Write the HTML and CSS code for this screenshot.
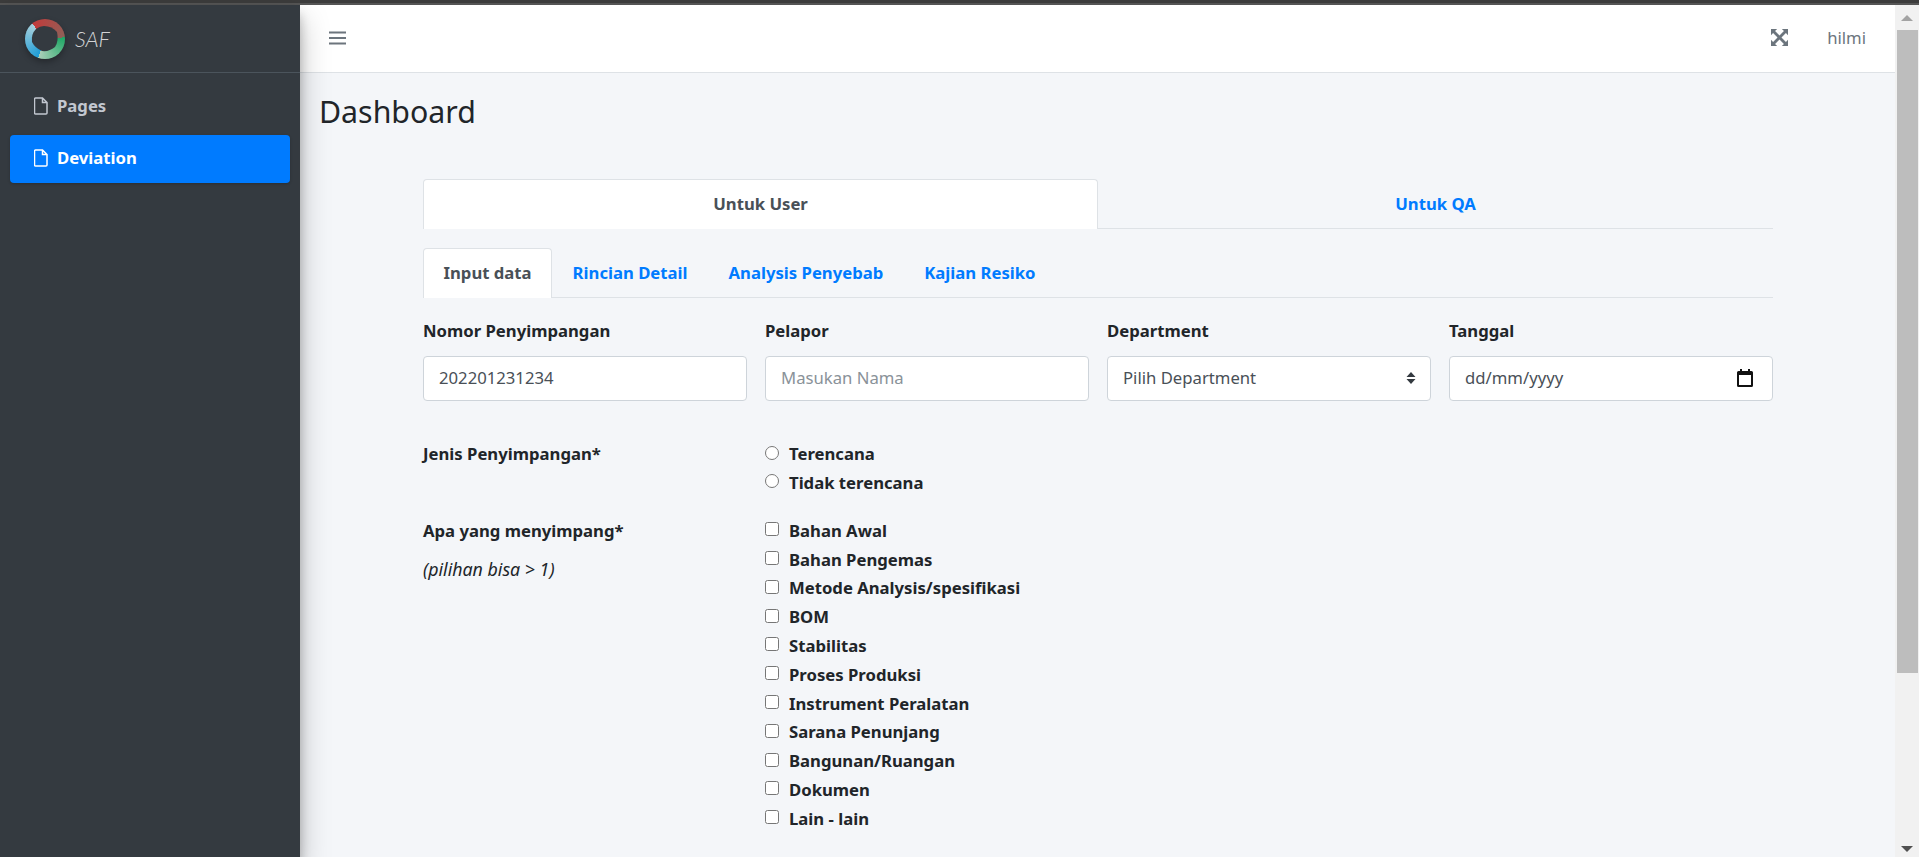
FILE: index.html
```html
<!DOCTYPE html>
<html lang="en">
<head>
    <meta charset="UTF-8">
    <meta name="viewport" content="width=device-width, initial-scale=1.0">
    <title>Dashboard</title>
    <link rel="stylesheet" href="styles.css">
</head>
<body>
    <div class="topStrip"></div>
    <div class="app">
        <aside class="sidebar">
            <div class="brand">
                <div class="brandLogo">
                    <svg class="brandHole" viewBox="0 0 28 28"><path d="M13 1 Q21 1 26 7 Q28 16 24 22 Q18 27 11 26 Q4 23 1 17 Q0 9 5 4 Q9 1 13 1Z"/></svg>
                </div>
                <span class="brandText">SAF</span>
            </div>
            <nav class="sideNav">
                <a class="sideLink" href="#">
                    <svg class="fileIcon" viewBox="0 0 14 18"><path d="M1.500 1h7l4.500 4.500v10.500a1 1 0 0 1-1 1h-10.500a1 1 0 0 1-1-1v-14a1 1 0 0 1 1-1zM8.500 1v4.500h4.500"/></svg>
                    Pages
                </a>
                <a class="sideLink active" href="#">
                    <svg class="fileIcon" viewBox="0 0 14 18"><path d="M1.500 1h7l4.500 4.500v10.500a1 1 0 0 1-1 1h-10.500a1 1 0 0 1-1-1v-14a1 1 0 0 1 1-1zM8.500 1v4.500h4.500"/></svg>
                    Deviation
                </a>
            </nav>
        </aside>

        <div class="main">
            <header class="navbar">
                <svg class="burger" viewBox="0 0 17 14"><path d="M0 1.500h17M0 7h17M0 12.500h17"/></svg>
                <div class="navRight">
                    <svg class="expand" viewBox="0 0 18 18">
                        <path d="M0 0h6.500L4.300 2.200 9 6.900 13.700 2.200 11.500 0H18v6.500l-2.200-2.200L11.100 9l4.700 4.700 2.200-2.200V18h-6.500l2.200-2.200L9 11.100l-4.700 4.700L6.500 18H0v-6.500l2.200 2.200L6.900 9 2.200 4.300 0 6.500z"/>
                    </svg>
                    <span class="userName">hilmi</span>
                </div>
            </header>

            <main class="content">
                <h1 class="pageTitle">Dashboard</h1>

                <div class="formWrap">
                    <div class="tabs tabsFill">
                        <a class="tab active" href="#">Untuk User</a>
                        <a class="tab" href="#">Untuk QA</a>
                    </div>
                    <div class="tabs tabsSub">
                        <a class="tab active" href="#">Input data</a>
                        <a class="tab" href="#">Rincian Detail</a>
                        <a class="tab" href="#">Analysis Penyebab</a>
                        <a class="tab" href="#">Kajian Resiko</a>
                    </div>

                    <div class="fieldRow">
                        <div class="field">
                            <label class="fieldLabel">Nomor Penyimpangan</label>
                            <input class="control" type="text" value="202201231234">
                        </div>
                        <div class="field">
                            <label class="fieldLabel">Pelapor</label>
                            <input class="control" type="text" placeholder="Masukan Nama">
                        </div>
                        <div class="field">
                            <label class="fieldLabel">Department</label>
                            <div class="controlWrap">
                                <select class="control">
                                    <option>Pilih Department</option>
                                </select>
                                <svg class="selectArrows" viewBox="0 0 10 12"><path d="M5 0l4.500 5h-9zM5 12l4.500-5h-9z"/></svg>
                            </div>
                        </div>
                        <div class="field">
                            <label class="fieldLabel">Tanggal</label>
                            <div class="controlWrap">
                                <input class="control" type="text" value="dd/mm/yyyy">
                                <svg class="calendar" viewBox="0 0 16 18"><path d="M3 0h2v2h6V0h2v2h1.500A1.500 1.500 0 0 1 16 3.500v13a1.500 1.500 0 0 1-1.500 1.500h-13A1.500 1.500 0 0 1 0 16.500v-13A1.500 1.500 0 0 1 1.500 2H3zM2 6v10h12V6z"/></svg>
                            </div>
                        </div>
                    </div>

                    <div class="choiceRow">
                        <div class="choiceLabel">
                            <p class="choiceTitle">Jenis Penyimpangan*</p>
                        </div>
                        <div class="choiceList">
                            <label class="choice"><input type="radio" name="jenis"> Terencana</label>
                            <label class="choice"><input type="radio" name="jenis"> Tidak terencana</label>
                        </div>
                    </div>

                    <div class="choiceRow">
                        <div class="choiceLabel">
                            <p class="choiceTitle">Apa yang menyimpang*</p>
                            <p class="choiceHint">(pilihan bisa &gt; 1)</p>
                        </div>
                        <div class="choiceList">
                            <label class="choice"><input type="checkbox"> Bahan Awal</label>
                            <label class="choice"><input type="checkbox"> Bahan Pengemas</label>
                            <label class="choice"><input type="checkbox"> Metode Analysis/spesifikasi</label>
                            <label class="choice"><input type="checkbox"> BOM</label>
                            <label class="choice"><input type="checkbox"> Stabilitas</label>
                            <label class="choice"><input type="checkbox"> Proses Produksi</label>
                            <label class="choice"><input type="checkbox"> Instrument Peralatan</label>
                            <label class="choice"><input type="checkbox"> Sarana Penunjang</label>
                            <label class="choice"><input type="checkbox"> Bangunan/Ruangan</label>
                            <label class="choice"><input type="checkbox"> Dokumen</label>
                            <label class="choice"><input type="checkbox"> Lain - lain</label>
                        </div>
                    </div>
                </div>
            </main>
        </div>

        <div class="scrollbar">
            <span class="scrollUp"></span>
            <div class="scrollThumb"></div>
            <span class="scrollDown"></span>
        </div>
    </div>
</body>
</html>
```

FILE: styles.css
```css
* {
    box-sizing: border-box;
}
html, body {
    height: 100%;
    margin: 0;
    overflow: hidden;
}
body {
    display: flex;
    flex-direction: column;
    font-family: "Noto Sans", "Open Sans", sans-serif;
    font-size: 16.7px;
    line-height: 24px;
    color: #212529;
    background-color: #f4f6f9;
}
a {
    text-decoration: none;
}

.topStrip {
    height: 5px;
    flex: none;
    background-color: #3c3c3c;
    border-bottom: 2px solid #555;
}
.app {
    flex: 1;
    display: flex;
    min-height: 0;
}

/* sidebar */
.sidebar {
    width: 300px;
    flex: none;
    background-color: #343a40;
    box-shadow: 0 14px 28px rgba(0, 0, 0, 0.25), 0 10px 10px rgba(0, 0, 0, 0.22);
    z-index: 2;
}
.brand {
    height: 68px;
    display: flex;
    align-items: center;
    gap: 10px;
    padding-left: 25px;
    border-bottom: 1px solid #4b545c;
}
.brandLogo {
    width: 40px;
    height: 40px;
    display: grid;
    place-items: center;
    border-radius: 50%;
    background: conic-gradient(from 320deg, #c33a3a 0, #8f6058 125deg, #1fa765 125deg, #a9cfb8 240deg, #1e9dd6 240deg, #a8d0dc 360deg);
    box-shadow: 0 3px 6px rgba(0, 0, 0, 0.3);
}
.brandHole {
    width: 28px;
    height: 28px;
    fill: #343a40;
}
.brandText {
    font-family: "Lato", sans-serif;
    font-size: 21.500px;
    font-style: italic;
    font-weight: 300;
    color: rgba(255, 255, 255, 0.8);
}
.sideNav {
    padding: 10px 10px 0;
    display: flex;
    flex-direction: column;
    gap: 4px;
}
.sideLink {
    height: 48px;
    display: flex;
    align-items: center;
    gap: 9px;
    padding: 0 0 2px 24px;
    border-radius: 4px;
    font-weight: 700;
    color: #c2c7d0;
}
.sideLink.active {
    background-color: #007bff;
    color: #fff;
    box-shadow: 0 1px 3px rgba(0, 0, 0, 0.2);
}
.fileIcon {
    width: 14px;
    height: 18px;
    fill: none;
    stroke: currentColor;
    stroke-width: 1.5;
}

/* top navbar */
.main {
    flex: 1;
    min-width: 0;
    display: flex;
    flex-direction: column;
}
.navbar {
    height: 68px;
    flex: none;
    display: flex;
    align-items: center;
    justify-content: space-between;
    padding: 0 29px 2px;
    background-color: #fff;
    border-bottom: 1px solid #dee2e6;
}
.burger {
    width: 17px;
    height: 14px;
    fill: none;
    stroke: #6c757d;
    stroke-width: 2;
}
.navRight {
    display: flex;
    align-items: center;
    gap: 39px;
}
.expand {
    width: 17px;
    height: 17px;
    fill: #6c757d;
}
.userName {
    color: #6c757d;
}

/* page */
.content {
    flex: 1;
    padding: 0 19px;
}
.pageTitle {
    margin: 19px 0 0;
    font-size: 30.300px;
    font-weight: 400;
    line-height: 40px;
}
.formWrap {
    margin: 47px 103px 0 104px;
}

.tabs {
    display: flex;
    border-bottom: 1px solid #dee2e6;
    font-weight: 700;
}
.tab {
    color: #007bff;
    border: 1px solid transparent;
    border-bottom: 0;
    border-radius: 4px 4px 0 0;
    margin-bottom: -1px;
    text-align: center;
}
.tab.active {
    color: #495057;
    background-color: #fff;
    border-color: #dee2e6;
    padding-bottom: 1px;
}
.tabsFill .tab {
    flex: 1;
    height: 50px;
    line-height: 48px;
}
.tabsSub {
    margin-top: 19px;
}
.tabsSub .tab {
    height: 50px;
    line-height: 48px;
    padding: 0 19.500px;
}

.fieldRow {
    display: grid;
    grid-template-columns: repeat(4, 1fr);
    gap: 18px;
    margin-top: 21px;
}
.fieldLabel {
    display: block;
    font-weight: 700;
    margin-bottom: 13px;
}
.controlWrap {
    position: relative;
}
.control {
    display: block;
    width: 100%;
    height: 45px;
    padding: 0 15px 2px;
    font: inherit;
    color: #495057;
    background-color: #fff;
    border: 1px solid #ced4da;
    border-radius: 4px;
    appearance: none;
}
.control::placeholder {
    color: #8a9299;
}
.selectArrows {
    position: absolute;
    right: 15px;
    top: 16px;
    width: 10px;
    height: 12px;
    fill: #343a40;
}
.calendar {
    position: absolute;
    right: 20px;
    top: 13px;
    width: 16px;
    height: 18px;
    fill: #111;
}

.choiceRow {
    display: grid;
    grid-template-columns: 342px 1fr;
    margin-top: 24px;
}
.fieldRow + .choiceRow {
    margin-top: 41px;
}
.choiceLabel p {
    margin: 0;
}
.choiceTitle {
    font-weight: 700;
}
.choiceHint {
    margin-top: 14px !important;
    font-size: 17.800px;
    font-style: italic;
}
.choiceList {
    display: flex;
    flex-direction: column;
    gap: 4.800px;
}
.choice {
    display: flex;
    align-items: center;
    gap: 10px;
    font-weight: 700;
}
.choice input {
    margin: 0 0 3px 0;
    width: 14px;
    height: 14px;
}

/* fake scrollbar, the page itself does not scroll */
.scrollbar {
    width: 24px;
    flex: none;
    display: flex;
    flex-direction: column;
    background-color: #f1f1f1;
}
.scrollUp, .scrollDown {
    width: 0;
    height: 0;
    flex: none;
    align-self: center;
    border-left: 6px solid transparent;
    border-right: 6px solid transparent;
}
.scrollUp {
    margin: 10px 0 9px;
    border-bottom: 6px solid #a3a3a3;
}
.scrollDown {
    margin: auto 0 5px;
    border-top: 6px solid #505050;
}
.scrollThumb {
    height: 643px;
    margin: 0 1px 0 2px;
    background-color: #bdbdbd;
}
```
